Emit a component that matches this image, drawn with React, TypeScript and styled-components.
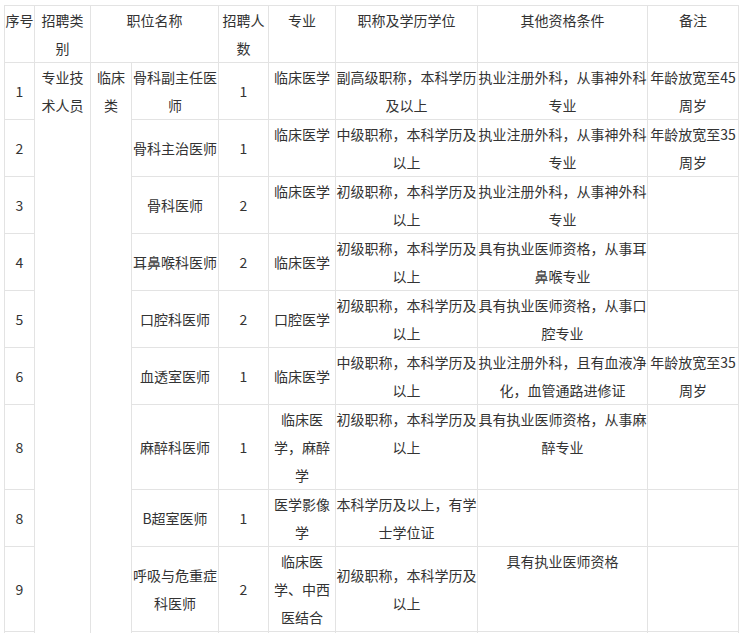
import React from "react";
import styled, { createGlobalStyle } from "styled-components";

const GlobalStyle = createGlobalStyle`
  html, body {
    margin: 0;
    padding: 0;
    background: #ffffff;
    overflow: hidden;
  }
  body {
    font-family: "Noto Sans CJK SC", "Noto Sans", sans-serif;
  }
`;

const Page = styled.div`
  padding: 5px 0 0 4px;
`;

const Table = styled.table`
  border-collapse: collapse;
  table-layout: fixed;
  width: 734px;
  font-family: "Noto Sans CJK SC", "Noto Sans", sans-serif;
  font-size: 14px;
  line-height: 28px;
  color: #333333;
`;

type VAlign = "top" | "middle";

const HeadCell = styled.th`
  border: 1px solid #e3e3e3;
  padding: 0;
  font-weight: normal;
  text-align: center;
  vertical-align: top;
`;

const Cell = styled.td<{ $v?: VAlign }>`
  border: 1px solid #e3e3e3;
  padding: 0;
  text-align: center;
  vertical-align: ${(p) => p.$v ?? "middle"};
`;

const TailRow = styled.tr`
  height: 40px;
`;

const widths = [30, 56, 41, 87, 50, 67, 142, 170, 91];

type Row = {
  no: string;
  name: string;
  count: string;
  major: string;
  majorV?: VAlign;
  qual: string;
  qualV?: VAlign;
  other: string;
  otherV?: VAlign;
  note: string;
};

const rows: Row[] = [
  {
    no: "1",
    name: "骨科副主任医师",
    count: "1",
    major: "临床医学",
    majorV: "top",
    qual: "副高级职称，本科学历及以上",
    other: "执业注册外科，从事神外科专业",
    note: "年龄放宽至45周岁",
  },
  {
    no: "2",
    name: "骨科主治医师",
    count: "1",
    major: "临床医学",
    majorV: "top",
    qual: "中级职称，本科学历及以上",
    other: "执业注册外科，从事神外科专业",
    note: "年龄放宽至35周岁",
  },
  {
    no: "3",
    name: "骨科医师",
    count: "2",
    major: "临床医学",
    majorV: "top",
    qual: "初级职称，本科学历及以上",
    other: "执业注册外科，从事神外科专业",
    note: "",
  },
  {
    no: "4",
    name: "耳鼻喉科医师",
    count: "2",
    major: "临床医学",
    qual: "初级职称，本科学历及以上",
    other: "具有执业医师资格，从事耳鼻喉专业",
    note: "",
  },
  {
    no: "5",
    name: "口腔科医师",
    count: "2",
    major: "口腔医学",
    qual: "初级职称，本科学历及以上",
    other: "具有执业医师资格，从事口腔专业",
    note: "",
  },
  {
    no: "6",
    name: "血透室医师",
    count: "1",
    major: "临床医学",
    qual: "中级职称，本科学历及以上",
    other: "执业注册外科，且有血液净化，血管通路进修证",
    note: "年龄放宽至35周岁",
  },
  {
    no: "8",
    name: "麻醉科医师",
    count: "1",
    major: "临床医学，麻醉学",
    qual: "初级职称，本科学历及以上",
    qualV: "top",
    other: "具有执业医师资格，从事麻醉专业",
    otherV: "top",
    note: "",
  },
  {
    no: "8",
    name: "B超室医师",
    count: "1",
    major: "医学影像学",
    qual: "本科学历及以上，有学士学位证",
    other: "",
    note: "",
  },
  {
    no: "9",
    name: "呼吸与危重症科医师",
    count: "2",
    major: "临床医学、中西医结合",
    qual: "初级职称，本科学历及以上",
    other: "具有执业医师资格",
    otherV: "top",
    note: "",
  },
];

export default function App() {
  return (
    <>
      <GlobalStyle />
      <Page>
        <Table>
          <colgroup>
            {widths.map((w, i) => (
              <col key={i} style={{ width: w }} />
            ))}
          </colgroup>
          <thead>
            <tr>
              <HeadCell>序号</HeadCell>
              <HeadCell>招聘类别</HeadCell>
              <HeadCell colSpan={2}>职位名称</HeadCell>
              <HeadCell>招聘人数</HeadCell>
              <HeadCell>专业</HeadCell>
              <HeadCell>职称及学历学位</HeadCell>
              <HeadCell>其他资格条件</HeadCell>
              <HeadCell>备注</HeadCell>
            </tr>
          </thead>
          <tbody>
            {rows.map((r, i) => (
              <tr key={i}>
                <Cell>{r.no}</Cell>
                {i === 0 && (
                  <>
                    <Cell $v="top" rowSpan={rows.length + 1}>
                      专业技术人员
                    </Cell>
                    <Cell $v="top" rowSpan={rows.length + 1}>
                      临床类
                    </Cell>
                  </>
                )}
                <Cell>{r.name}</Cell>
                <Cell>{r.count}</Cell>
                <Cell $v={r.majorV}>{r.major}</Cell>
                <Cell $v={r.qualV}>{r.qual}</Cell>
                <Cell $v={r.otherV}>{r.other}</Cell>
                <Cell>{r.note}</Cell>
              </tr>
            ))}
            <TailRow>
              <Cell />
              <Cell />
              <Cell />
              <Cell />
              <Cell />
              <Cell />
              <Cell />
            </TailRow>
          </tbody>
        </Table>
      </Page>
    </>
  );
}
